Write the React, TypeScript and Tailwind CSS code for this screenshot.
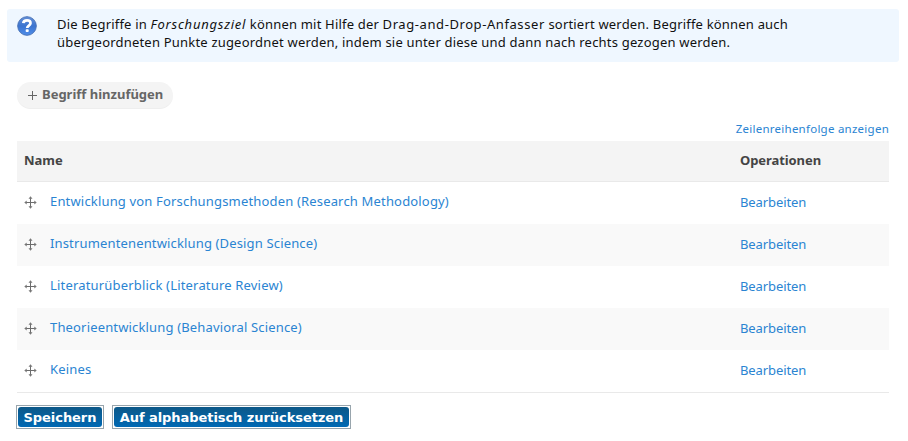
const rows = [
  { name: 'Entwicklung von Forschungsmethoden (Research Methodology)', tracking: 'tracking-[0.17px]' },
  { name: 'Instrumentenentwicklung (Design Science)', tracking: 'tracking-[0.15px]' },
  { name: 'Literaturüberblick (Literature Review)', tracking: 'tracking-[0.18px]' },
  { name: 'Theorieentwicklung (Behavioral Science)', tracking: 'tracking-[0.16px]' },
  { name: 'Keines', tracking: 'tracking-[0.2px]' },
];

function HelpIcon() {
  return (
    <svg width="20" height="20" viewBox="0 0 20 20" className="block shrink-0">
      <defs>
        <linearGradient id="help" x1="0" y1="0" x2="0" y2="1">
          <stop offset="0" stopColor="#6590d8" />
          <stop offset="0.5" stopColor="#3b74d0" />
          <stop offset="1" stopColor="#4f8eea" />
        </linearGradient>
      </defs>
      <circle cx="10" cy="10" r="9.3" fill="url(#help)" stroke="#4a74b8" strokeWidth="1" />
      <path d="M6.3 7.2C6.5 5.2 8 4.4 10 4.4s3.5 1 3.5 2.8c0 2.3-3.3 2.4-3.3 4.7" fill="none" stroke="#fff" strokeWidth="2.7" />
      <rect x="8.7" y="13.3" width="3" height="2.7" rx="0.8" fill="#fff" />
    </svg>
  );
}

function MoveIcon() {
  return (
    <svg width="13" height="13" viewBox="0 0 13 13" className="mt-[14px] block shrink-0">
      <path d="M6 1h1v11H6zM1 6h11v1H1z" fill="#6c6c6c" />
      <path d="M6.5 0.3l2 2.4h-4zM6.5 12.7l2-2.4h-4zM0.3 6.5l2.4-2v4zM12.7 6.5l-2.4-2v4z" fill="#777" />
    </svg>
  );
}

export default function App() {
  return (
    <div className="h-[441px] w-[908px] overflow-hidden bg-white pt-[9px] font-['Noto_Sans','Open_Sans',sans-serif] text-[13px] leading-[18px] whitespace-nowrap text-[#111]">
      <div className="ml-[7px] flex h-[53px] w-[892px] rounded-[3px] bg-[#eff7ff] pt-[7px] pl-[10px]">
        <HelpIcon />
        <div className="ml-5 -mt-px">
          <p className="tracking-[0.19px]">
            Die Begriffe in <em className="tracking-[0.77px]">Forschungsziel</em> können mit Hilfe der{' '}
            <span className="tracking-[0.58px]">Drag-and-Drop-Anfasser</span> sortiert werden. Begriffe können auch
          </p>
          <p className="tracking-[0.2px]">übergeordneten Punkte zugeordnet werden, indem sie unter diese und dann nach rechts gezogen werden.</p>
        </div>
      </div>

      <a className="mt-5 ml-[17px] flex h-[27px] w-[156px] items-start rounded-full border-b border-[#eee] bg-[#f4f4f4] pt-[3px] pl-[11px] font-bold text-[#666]">
        <svg width="9" height="9" viewBox="0 0 9 9" className="mt-[6px] mr-[5px] shrink-0">
          <path d="M4 0h1v9H4zM0 4h9v1H0z" fill="#666" />
        </svg>
        <span>Begriff hinzufügen</span>
      </a>

      <div className="mx-[17px] mt-[11px] flex h-[21px] w-[872px] justify-end text-[11.5px] tracking-[0.25px] text-[#2a84d2]">
        <a>Zeilenreihenfolge anzeigen</a>
      </div>

      <div className="ml-[17px] w-[872px]">
        <div className="flex h-[41px] border-b border-[#e9e9e9] bg-[#f4f4f4] pt-[10px] font-bold text-[#444]">
          <span className="w-[723px] pl-[7px]">Name</span>
          <span className="tracking-[-0.08px]">Operationen</span>
        </div>
        {rows.map((row) => (
          <div key={row.name} className="flex h-[42px] text-[#2a84d2] odd:bg-[#f9f9f9] even:bg-white last:h-[43px] last:border-b last:border-[#e9e9e9]">
            <span className="flex w-[723px] pl-[7px]">
              <MoveIcon />
              <a className={`mt-[10px] ml-[13px] ${row.tracking}`}>{row.name}</a>
            </span>
            <a className="mt-[11px] tracking-[-0.1px]">Bearbeiten</a>
          </div>
        ))}
      </div>

      <div className="mt-3 ml-4 flex gap-2 font-['DejaVu_Sans',Verdana,sans-serif] text-[13px] font-bold tracking-[-0.06px]">
        <button className="h-6 w-[88px] border border-[#98a5ad] bg-white p-px">
          <span className="flex h-5 items-center justify-center rounded-[3px] bg-linear-to-b from-[#0c5888] to-[#0069b4] pt-px text-white">Speichern</span>
        </button>
        <button className="h-6 w-[239px] border border-[#98a5ad] bg-white p-px">
          <span className="flex h-5 items-center justify-center rounded-[3px] bg-linear-to-b from-[#0c5888] to-[#0069b4] pt-px text-white">Auf alphabetisch zurücksetzen</span>
        </button>
      </div>
    </div>
  );
}
